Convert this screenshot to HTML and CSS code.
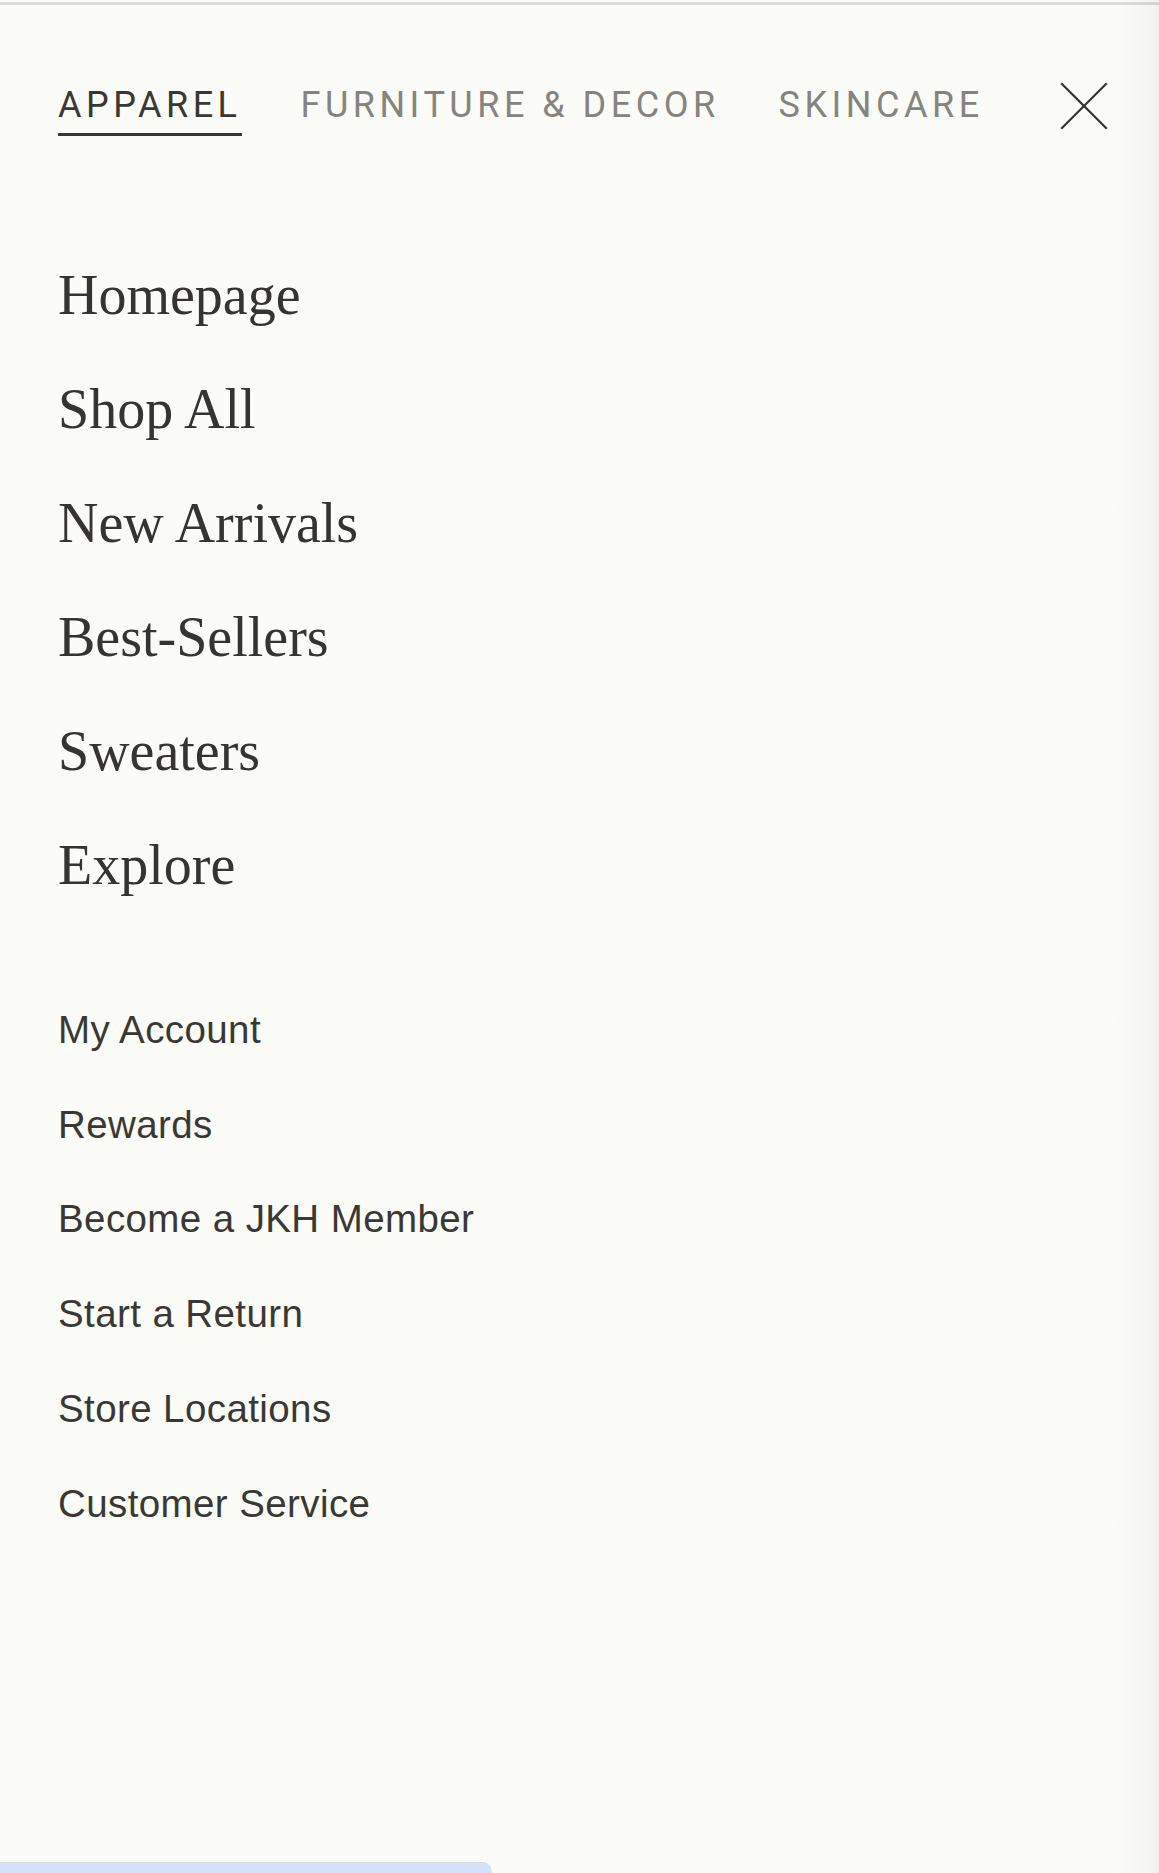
FILE: index.html
```html
<!DOCTYPE html>
<html lang="en">
<head>
<meta charset="utf-8">
<title>Menu</title>
<link rel="stylesheet" href="styles.css">
</head>
<body>
<div class="drawer">
  <div class="topline"></div>
  <header class="tabs">
    <nav class="tab-list">
      <a class="tab active" href="#">APPAREL</a>
      <a class="tab" href="#">FURNITURE &amp; DECOR</a>
      <a class="tab" href="#">SKINCARE</a>
    </nav>
    <button class="close" aria-label="Close">
      <svg width="48" height="48" viewBox="0 0 48 48" fill="none" stroke="#363431" stroke-width="2.2" stroke-linecap="square">
        <line x1="2" y1="2" x2="46" y2="46"/>
        <line x1="46" y1="2" x2="2" y2="46"/>
      </svg>
    </button>
  </header>
  <ul class="primary">
    <li><a href="#">Homepage</a></li>
    <li><a href="#">Shop All</a></li>
    <li><a href="#">New Arrivals</a></li>
    <li><a href="#">Best-Sellers</a></li>
    <li><a href="#">Sweaters</a></li>
    <li><a href="#">Explore</a></li>
  </ul>
  <ul class="secondary">
    <li><a href="#">My Account</a></li>
    <li><a href="#">Rewards</a></li>
    <li><a href="#">Become a JKH Member</a></li>
    <li><a href="#">Start a Return</a></li>
    <li><a href="#">Store Locations</a></li>
    <li><a href="#">Customer Service</a></li>
  </ul>
  <div class="peek"></div>
</div>
</body>
</html>
```
FILE: styles.css
```css
html, body {
  margin: 0;
  padding: 0;
  background: #fbfbf7;
}
body {
  height: 1873px;
  overflow: hidden;
  position: relative;
}
body::after {
  content: "";
  position: absolute;
  top: 0;
  right: 0;
  width: 44px;
  height: 100%;
  background: linear-gradient(to right, rgba(0,0,0,0), rgba(0,0,0,0.035));
  pointer-events: none;
}
a {
  text-decoration: none;
  color: inherit;
}
.drawer {
  display: flex;
  flex-direction: column;
}
.topline {
  margin-top: 2px;
  height: 3px;
  background: #dcdcd8;
}
.tabs {
  display: flex;
  align-items: flex-start;
  padding: 77px 51px 0 58px;
}
.tab-list {
  display: flex;
  gap: 59px;
  margin-top: 3px;
}
.tab {
  font-family: Roboto, "Liberation Sans", sans-serif;
  font-size: 36px;
  line-height: 40px;
  letter-spacing: 4.5px;
  color: #868480;
  padding-bottom: 8px;
  border-bottom: 3px solid transparent;
}
.tab.active {
  color: #3a3835;
  border-bottom-color: #3a3835;
}
.close {
  margin-left: auto;
  margin-top: 0;
  padding: 0;
  border: 0;
  background: none;
  width: 48px;
  height: 48px;
  display: block;
}
.close svg {
  display: block;
}
.primary, .secondary {
  list-style: none;
  margin: 0;
  padding: 0 0 0 58px;
}
.primary {
  margin-top: 102px;
  font-family: "Liberation Serif", "Times New Roman", serif;
  font-size: 56px;
  line-height: 114px;
  color: #363431;
}
.secondary {
  margin-top: 61px;
  font-family: "Liberation Sans", Arial, sans-serif;
  font-size: 38.5px;
  letter-spacing: 0.4px;
  line-height: 94.7px;
  color: #3a3835;
}
.peek {
  margin-top: 311px;
  width: 492px;
  height: 11px;
  background: #d3e2fa;
  border-top: 1px solid #d8d8d4;
  border-top-right-radius: 10px;
  box-sizing: border-box;
}
```
